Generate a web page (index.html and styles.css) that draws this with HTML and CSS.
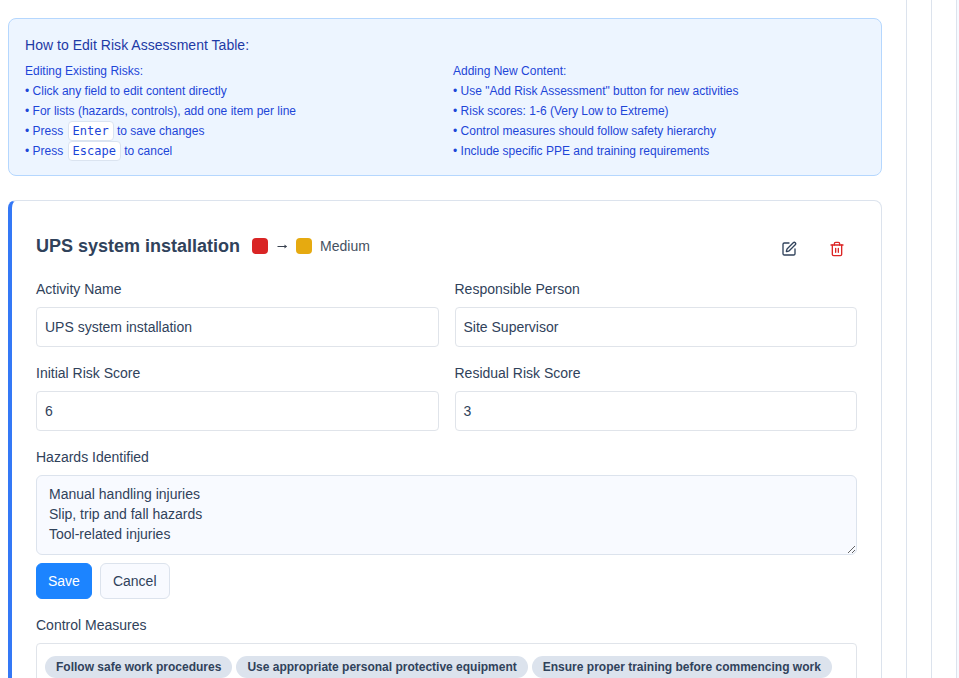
FILE: index.html
```
<!DOCTYPE html>
<html lang="en">
<head>
<meta charset="utf-8">
<title>Risk Assessment</title>
<link rel="stylesheet" href="styles.css">
</head>
<body>
<div class="page"><div class="panel"><main class="content">
  <section class="help">
    <h4>How to Edit Risk Assessment Table:</h4>
    <div class="help-grid">
      <div>
        <p>Editing Existing Risks:</p>
        <ul>
          <li>• <span>Click any field to edit content directly</span></li>
          <li>• <span>For lists (hazards, controls), add one item per line</span></li>
          <li>• <span>Press <kbd>Enter</kbd> to save changes</span></li>
          <li>• <span>Press <kbd>Escape</kbd> to cancel</span></li>
        </ul>
      </div>
      <div>
        <p>Adding New Content:</p>
        <ul>
          <li>• <span>Use "Add Risk Assessment" button for new activities</span></li>
          <li>• <span>Risk scores: 1-6 (Very Low to Extreme)</span></li>
          <li>• <span>Control measures should follow safety hierarchy</span></li>
          <li>• <span>Include specific PPE and training requirements</span></li>
        </ul>
      </div>
    </div>
  </section>
  <section class="card">
    <header class="card-head">
      <div class="summary">
        <h3>UPS system installation</h3>
        <i class="swatch red"></i>
        <svg class="arrow" width="12" height="10" viewBox="0 0 12 10"><path d="M1.500 4.500h9" stroke="currentColor"/><path d="M8.500 2.500 11 4.500 8.500 6.500Z" fill="currentColor"/></svg>
        <i class="swatch amber"></i>
        <span class="level">Medium</span>
      </div>
      <div class="actions">
        <button class="icon" aria-label="Edit"><svg width="16" height="16" viewBox="0 0 24 24" fill="none" stroke="currentColor" stroke-width="2" stroke-linecap="round" stroke-linejoin="round"><path d="M12 3H5a2 2 0 0 0-2 2v14a2 2 0 0 0 2 2h14a2 2 0 0 0 2-2v-7"/><path d="M18.375 2.625a1 1 0 0 1 3 3l-9.013 9.014a2 2 0 0 1-.853.505l-2.873.84a.5.5 0 0 1-.62-.62l.84-2.873a2 2 0 0 1 .506-.852z"/></svg></button>
        <button class="icon delete" aria-label="Delete"><svg width="16" height="16" viewBox="0 0 24 24" fill="none" stroke="currentColor" stroke-width="2" stroke-linecap="round" stroke-linejoin="round"><path d="M3 6h18"/><path d="M19 6v14c0 1-1 2-2 2H7c-1 0-2-1-2-2V6"/><path d="M8 6V4c0-1 1-2 2-2h4c1 0 2 1 2 2v2"/><path d="M10 11v6M14 11v6"/></svg></button>
      </div>
    </header>
    <div class="fields">
      <div><label>Activity Name</label><div class="value">UPS system installation</div></div>
      <div><label>Responsible Person</label><div class="value">Site Supervisor</div></div>
      <div><label>Initial Risk Score</label><div class="value">6</div></div>
      <div><label>Residual Risk Score</label><div class="value">3</div></div>
    </div>
    <div class="block">
      <label>Hazards Identified</label>
      <textarea>Manual handling injuries
Slip, trip and fall hazards
Tool-related injuries</textarea>
      <div class="buttons"><button class="btn primary">Save</button><button class="btn">Cancel</button></div>
    </div>
    <div class="block">
      <label>Control Measures</label>
      <div class="value tags"><span>Follow safe work procedures</span><span>Use appropriate personal protective equipment</span><span>Ensure proper training before commencing work</span></div>
    </div>
  </section>
</main></div></div>
</body>
</html>
```
FILE: styles.css
```
* { box-sizing: border-box; }
body { margin: 0; height: 678px; overflow: hidden; background: #f8faff; color: #30425b; font: 14px/20px "Liberation Sans", Arial, sans-serif; }
h3, h4, p, ul { margin: 0; padding: 0; font-weight: 400; }
ul { list-style: none; }
li { height: 20px; }
button, textarea { font: inherit; color: inherit; }
.page { width: 957px; height: 678px; padding-right: 24px; border-right: 1px solid #dce3ed; background: #fff; }
.panel { height: 678px; padding-right: 24px; border-right: 1px solid #dce3ed; }
.content { height: 678px; padding: 18px 24px 0 8px; border-right: 1px solid #dce3ed; overflow: hidden; }
.help { height: 158px; padding: 16px; border: 1px solid #b5d7fe; border-radius: 8px; background: #edf5ff; color: #1d46d8; font-size: 12px; }
.help h4 { margin-bottom: 6px; color: #1e3aa5; font-size: 14px; letter-spacing: 0.03px; }
.help-grid { display: grid; grid-template-columns: 1fr 1fr; gap: 16px; }
kbd { display: inline-block; height: 20px; margin-left: 1px; padding: 0 4px; border: 1px solid #dbe4f0; border-radius: 4px; background: #fff; font: 12px/18px "DejaVu Sans Mono", monospace; vertical-align: top; }
.card { height: 700px; margin-top: 24px; padding: 24px; border: 1px solid #dce3ed; border-left: 4px solid #3478f6; border-radius: 8px; }
.card-head { display: flex; justify-content: space-between; height: 48px; margin-bottom: 6px; }
.summary { display: flex; align-items: center; height: 42px; }
h3 { margin-right: 12px; font-size: 18px; line-height: 28px; font-weight: 700; }
.swatch { width: 16px; height: 16px; border-radius: 4px; }
.red { background: #d92525; }
.amber { background: #e6aa10; }
.arrow { margin: 2px 8px 0; color: #3a4351; }
.level { margin-left: 8px; color: #455161; }
.actions { display: flex; align-items: center; gap: 8px; }
.icon { display: grid; place-items: center; width: 40px; height: 36px; padding: 0; border: 0; background: none; }
.delete { color: #dc2626; }
.fields { display: grid; grid-template-columns: 1fr 1fr; gap: 16px; }
label { display: block; margin-bottom: 8px; }
.value { height: 40px; padding: 9px 8px; border: 1px solid #e0e4ea; border-radius: 4px; }
.block { margin-top: 16px; }
textarea { display: block; width: 100%; height: 80px; padding: 8px 12px; border: 1px solid #dce3ed; border-radius: 6px; background: #f8faff; resize: vertical; }
.buttons { display: flex; gap: 8px; margin-top: 8px; }
.btn { height: 36px; padding: 0 12px; border: 1px solid #dce3ed; border-radius: 6px; background: #f8faff; }
.primary { padding: 0 11px; border-color: #1c84ff; background: #1c84ff; color: #fff; }
.tags { display: flex; gap: 4px; height: 60px; padding-top: 12px; }
.tags span { height: 22px; padding: 0 11px; border-radius: 11px; background: #dce3ed; font-size: 12px; line-height: 22px; font-weight: 700; white-space: nowrap; }
```
